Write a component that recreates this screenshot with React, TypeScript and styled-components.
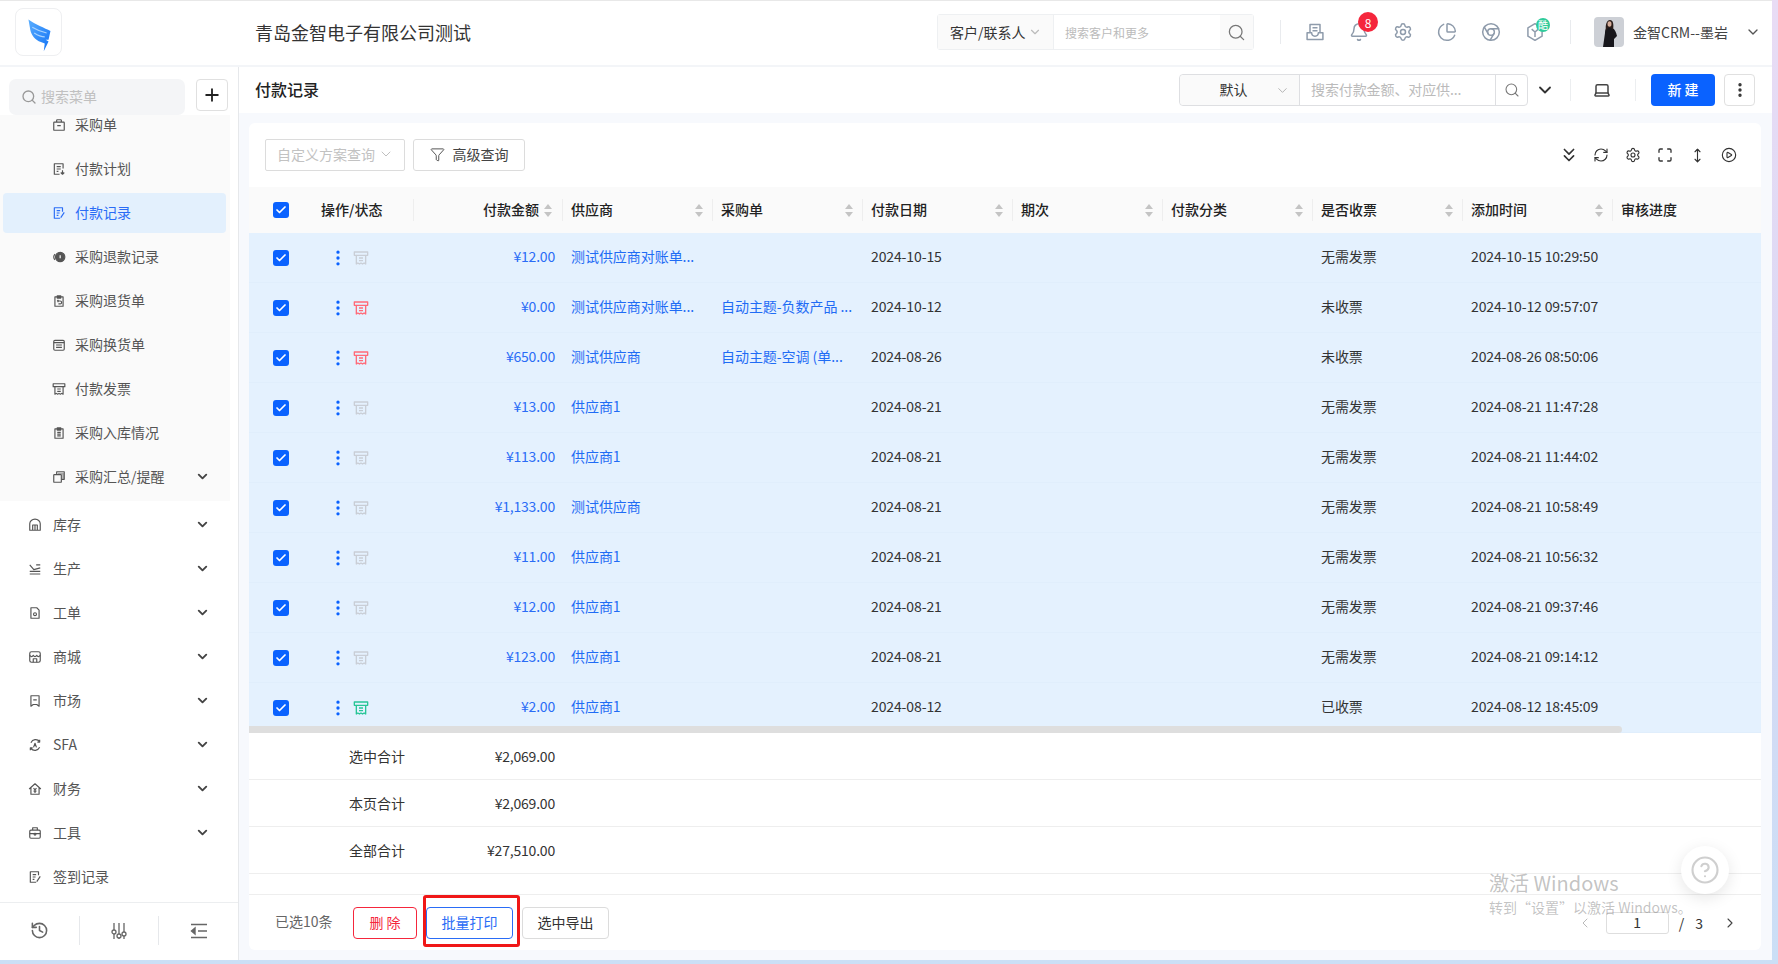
import React from 'react';
import styled, { createGlobalStyle } from 'styled-components';
import {
  Bell, Check, ChartPie, ChevronDown, ChevronLeft, ChevronRight, ChevronsDown, Chrome, CirclePlay, CircleHelp,
  EllipsisVertical, Funnel, History, Laptop, Maximize, MoveVertical, Plus, RefreshCw, Search, Settings,
} from 'lucide-react';

const GlobalStyle = createGlobalStyle`
  html, body { margin: 0; padding: 0; }
  body {
    font-family: "Noto Sans CJK SC", "Liberation Sans", sans-serif;
    font-size: 14px;
    color: #333;
    overflow: hidden;
  }
  * { box-sizing: border-box; }
`;

const COLUMNS = '52px 112px 149px 150px 150px 150px 150px 150px 150px 150px 149px';

const icons: Record<string, React.ReactNode> = {
  bag: <><rect x="3" y="7" width="18" height="14" rx="1" /><path d="M8 7V4a1 1 0 0 1 1-1h6a1 1 0 0 1 1 1v3M9 13h6" /></>,
  plan: <><path d="M19 11V3H4v18h9M8 8h7M8 12h7M8 16h3" /><path d="M18 14v7M15 18l3 3 3-3" /></>,
  record: <><path d="M18 10V3H4v18h10M8 8h6M8 12h5M8 16h3" /><path d="M21 11l-6 9" /></>,
  refund: <><circle cx="14" cy="12" r="8" fill="currentColor" /><path d="M5 7a8 8 0 0 0 0 10" /><path d="M14 9v5" stroke="#fff" /></>,
  back: <><path d="M5 5h14v16H5zM9 3h6v4H9z" /><path d="M9 12h5a2 2 0 0 1 0 5h-3M9 12l2-2M9 12l2 2" /></>,
  swap: <><rect x="3" y="4" width="18" height="17" rx="2" /><path d="M3 8h18M7 12h10M7 16h10" /></>,
  receipt: <><path d="M2 3h20v5h-3v13l-2.300-1.500L14.300 21 12 19.500 9.700 21l-2.400-1.500L5 21V8H2z" /><path d="M5 8h14M9 12h6M9 16h6" /></>,
  list: <><path d="M5 5h14v16H5zM9 3h6v4H9zM9 11h6M9 14h6M9 17h6" /></>,
  stack: <><rect x="3" y="8" width="13" height="13" rx="1" /><path d="M8 8V3h13v13h-5" /><path d="M10 6h9v9" strokeWidth="3" opacity=".5" /></>,
  store: <><path d="M3 21V10a9 8 0 0 1 18 0v11zM8 21v-9h8v9M12 12v9" /></>,
  make: <><path d="M3 5l7 8 11-3M14 5h7M3 16h18M3 20.500h18" /></>,
  ticket: <><path d="M5 3h10l4 4v14H5z" /><circle cx="12" cy="14" r="2.500" /></>,
  mall: <><rect x="3" y="3" width="18" height="18" rx="3" /><path d="M3 9c2 3 4.500 3 6 0 1.500 3 4.500 3 6 0 1.500 3 4 3 6 0M9 21v-6h6v6" /></>,
  market: <><path d="M5 3h14v18l-4-3H9l-4 3zM9 10h6" /></>,
  sfa: <><path d="M5 8a9 9 0 0 1 15-2M20 16a9 9 0 0 1-15 2M20 3v4h-4M4 21v-4h4M9.500 16l2.500-7 2.500 7" /></>,
  money: <><path d="M2 12l10-9 10 9M5 10v11h14V10" /><path d="M9.500 10.500l2.500 3 2.500-3M12 13.500V19M9.500 15.500h5" /></>,
  tool: <><rect x="3" y="7" width="18" height="14" rx="2" /><path d="M8 7V3h8v4M3 13h18" /><circle cx="12" cy="14" r="1.500" /></>,
  sign: <><path d="M18 9V3H4v18h10M8 8h6M8 12h5M8 16h3" /><path d="M21 11l-6 9" /></>,
  tray: <><path d="M6 13V3h12v10M9 7h6M9 10.500h6" /><path d="M2.500 13H8a4 4 0 0 0 8 0h5.500v8h-19z" /></>,
  cube: <><path d="M12 2l8.500 5v10L12 22l-8.500-5V7z" /><path d="M8 8.500l4 3.500 4-3.500M12 12v6" /></>,
};

const subMenu = [
  ['bag', '采购单'], ['plan', '付款计划'], ['record', '付款记录'], ['refund', '采购退款记录'], ['back', '采购退货单'],
  ['swap', '采购换货单'], ['receipt', '付款发票'], ['list', '采购入库情况'], ['stack', '采购汇总/提醒'],
];

const topMenu = [
  ['store', '库存'], ['make', '生产'], ['ticket', '工单'], ['mall', '商城'], ['market', '市场'],
  ['sfa', 'SFA'], ['money', '财务'], ['tool', '工具'], ['sign', '签到记录'],
];

const headers = ['付款金额', '供应商', '采购单', '付款日期', '期次', '付款分类', '是否收票', '添加时间', '审核进度'];

const rows = [
  { tone: 'gray', amount: '¥12.00', supplier: '测试供应商对账单...', order: '', date: '2024-10-15', bill: '无需发票', added: '2024-10-15 10:29:50' },
  { tone: 'red', amount: '¥0.00', supplier: '测试供应商对账单...', order: '自动主题-负数产品 ...', date: '2024-10-12', bill: '未收票', added: '2024-10-12 09:57:07' },
  { tone: 'red', amount: '¥650.00', supplier: '测试供应商', order: '自动主题-空调 (单...', date: '2024-08-26', bill: '未收票', added: '2024-08-26 08:50:06' },
  { tone: 'gray', amount: '¥13.00', supplier: '供应商1', order: '', date: '2024-08-21', bill: '无需发票', added: '2024-08-21 11:47:28' },
  { tone: 'gray', amount: '¥113.00', supplier: '供应商1', order: '', date: '2024-08-21', bill: '无需发票', added: '2024-08-21 11:44:02' },
  { tone: 'gray', amount: '¥1,133.00', supplier: '测试供应商', order: '', date: '2024-08-21', bill: '无需发票', added: '2024-08-21 10:58:49' },
  { tone: 'gray', amount: '¥11.00', supplier: '供应商1', order: '', date: '2024-08-21', bill: '无需发票', added: '2024-08-21 10:56:32' },
  { tone: 'gray', amount: '¥12.00', supplier: '供应商1', order: '', date: '2024-08-21', bill: '无需发票', added: '2024-08-21 09:37:46' },
  { tone: 'gray', amount: '¥123.00', supplier: '供应商1', order: '', date: '2024-08-21', bill: '无需发票', added: '2024-08-21 09:14:12' },
  { tone: 'green', amount: '¥2.00', supplier: '供应商1', order: '', date: '2024-08-12', bill: '已收票', added: '2024-08-12 18:45:09' },
];

const toneColors: Record<string, string> = { gray: '#c9ced6', red: '#ff6a78', green: '#27c596' };

const totals = [['选中合计', '¥2,069.00'], ['本页合计', '¥2,069.00'], ['全部合计', '¥27,510.00']];

const MenuIcon = ({ name, size = 14, weight = 2 }: { name: string; size?: number; weight?: number }) => (
  <svg width={size} height={size} viewBox="0 0 24 24" fill="none" stroke="currentColor" strokeWidth={weight} strokeLinejoin="round">
    {icons[name]}
  </svg>
);

const Logo = () => (
  <svg width="47" height="48" viewBox="0 0 47 48">
    <defs>
      <linearGradient id="wing" x1="0" y1="0" x2="1" y2="1">
        <stop offset="0" stopColor="#5aaeff" />
        <stop offset="1" stopColor="#1272f5" />
      </linearGradient>
    </defs>
    <path d="M13 10C20 15 30 19 36 22L34 31H31L34 33L29 43L30 35L26 33.500C20 31 16 26 15 21Z" fill="url(#wing)" />
    <path d="M17 18C22 21 27 23 32 24M19 24C22 26 26 28 30 28" stroke="#a9d3ff" strokeWidth="1.200" fill="none" />
  </svg>
);

const AvatarArt = () => (
  <svg width="30" height="30" viewBox="0 0 30 30">
    <rect width="30" height="30" fill="#cdd0d6" />
    <path d="M9 30L11 16C11 12 12 11 14 11L18 11C21 12 22 15 23 19L20 22L20 30Z" fill="#17161b" />
    <path d="M12 14C11 7 13 3 16 3C19 3 20 7 19 13L17 11H14Z" fill="#2a1d1a" />
    <ellipse cx="15.500" cy="7" rx="2" ry="2.800" fill="#d7ae9b" />
  </svg>
);

const CheckBox = () => (
  <CheckMark>
    <Check size={12} strokeWidth={3.5} color="#fff" />
  </CheckMark>
);

const App = () => (
  <Root>
    <GlobalStyle />
    <TopBar>
      <LogoBox><Logo /></LogoBox>
      <CompanyName>青岛金智电子有限公司测试</CompanyName>
      <GlobalSearch>
        <SearchType>客户/联系人<ChevronDown size={14} color="#bbb" /></SearchType>
        <GlobalInput>搜索客户和更多</GlobalInput>
        <GlobalSearchButton><Search size={19} color="#777" strokeWidth={1.6} /></GlobalSearchButton>
      </GlobalSearch>
      <TopDivider $left={26} />
      <TopIcons>
        <TopIcon><MenuIcon name="tray" size={20} weight={1.8} /></TopIcon>
        <TopIcon><Bell size={20} strokeWidth={1.8} /><NoticeBadge>8</NoticeBadge></TopIcon>
        <TopIcon><Settings size={20} strokeWidth={1.8} /></TopIcon>
        <TopIcon><ChartPie size={20} strokeWidth={1.8} /></TopIcon>
        <TopIcon><Chrome size={20} strokeWidth={1.8} /></TopIcon>
        <TopIcon><MenuIcon name="cube" size={20} weight={1.8} /><CoolBadge>酷</CoolBadge></TopIcon>
      </TopIcons>
      <TopDivider $left={13} />
      <Avatar><AvatarArt /></Avatar>
      <UserName>金智CRM--墨岩</UserName>
      <UserChevron><ChevronDown size={16} /></UserChevron>
    </TopBar>

    <Body>
      <Sidebar>
        <SideSearchRow>
          <SideSearch><Search size={16} color="#999" /><SideSearchText>搜索菜单</SideSearchText></SideSearch>
          <AddButton><Plus size={20} color="#222" strokeWidth={2.2} /></AddButton>
        </SideSearchRow>
        <MenuScroll>
          <SubMenu>
            {subMenu.map(([icon, label], i) => (
              <SubItem key={label} $active={i === 2}>
                <MenuIcon name={icon} />
                <MenuLabel>{label}</MenuLabel>
                {i === subMenu.length - 1 && <MenuChevron><ChevronDown size={15} strokeWidth={3} /></MenuChevron>}
              </SubItem>
            ))}
          </SubMenu>
          {topMenu.map(([icon, label], i) => (
            <TopItem key={label}>
              <MenuIcon name={icon} />
              <MenuLabel>{label}</MenuLabel>
              {i < topMenu.length - 1 && <MenuChevron><ChevronDown size={15} strokeWidth={3} /></MenuChevron>}
            </TopItem>
          ))}
        </MenuScroll>
        <SideFooter>
          <SideFooterCell><History size={19} /></SideFooterCell>
          <SideFooterCell>
            <svg width="18" height="18" viewBox="0 0 18 18" fill="none" stroke="currentColor" strokeWidth="1.300">
              <path d="M4 1v7M4 12v5M9 1v11M9 16v1M14 1v9M14 14v3" />
              <circle cx="4" cy="10" r="2" /><circle cx="9" cy="14" r="2" /><circle cx="14" cy="12" r="2" />
            </svg>
          </SideFooterCell>
          <SideFooterCell>
            <svg width="18" height="16" viewBox="0 0 18 16" fill="none" stroke="currentColor" strokeWidth="1.400">
              <path d="M1 1.500h16M8 8h9M1 14.500h16" /><path d="M5 5v6L1.500 8z" fill="currentColor" />
            </svg>
          </SideFooterCell>
        </SideFooter>
      </Sidebar>

      <Main>
        <TitleRow>
          <PageTitle>付款记录</PageTitle>
          <TitleSearch>
            <ViewSelect>默认<ViewChevron><ChevronDown size={15} color="#aaa" strokeWidth={1.4} /></ViewChevron></ViewSelect>
            <TitleInput>搜索付款金额、对应供...</TitleInput>
            <TitleSearchButton><Search size={16} color="#777" strokeWidth={1.6} /></TitleSearchButton>
          </TitleSearch>
          <ExpandButton><ChevronDown size={20} color="#333" strokeWidth={2.2} /></ExpandButton>
          <TitleDivider $left={13} />
          <LaptopButton><Laptop size={18} color="#444" /></LaptopButton>
          <TitleDivider $left={17} />
          <NewButton>新 建</NewButton>
          <MoreButton><EllipsisVertical size={18} color="#333" strokeWidth={2.5} /></MoreButton>
        </TitleRow>

        <Content>
          <Card>
            <Toolbar>
              <PlanSelect>自定义方案查询<ChevronDown size={16} color="#bbb" strokeWidth={1.4} /></PlanSelect>
              <FilterButton><Funnel size={15} color="#555" strokeWidth={1.6} />高级查询</FilterButton>
              <ToolIcons>
                <ToolIcon><ChevronsDown size={22} strokeWidth={1.8} /></ToolIcon>
                <ToolIcon><RefreshCw size={16} strokeWidth={1.7} /></ToolIcon>
                <ToolIcon><Settings size={16} strokeWidth={1.7} /></ToolIcon>
                <ToolIcon><Maximize size={16} strokeWidth={2} /></ToolIcon>
                <ToolIcon><MoveVertical size={15} strokeWidth={1.8} /></ToolIcon>
                <ToolIcon><CirclePlay size={16} strokeWidth={1.7} /></ToolIcon>
              </ToolIcons>
            </Toolbar>

            <TableHead>
              <CheckCell><CheckBox /></CheckCell>
              <OpsTitle>操作/状态</OpsTitle>
              {headers.map((h, i) => (
                <HeadCell key={h} $right={i === 0}>
                  <HeadLabel>{h}</HeadLabel>
                  {i < headers.length - 1 && <SortMark />}
                </HeadCell>
              ))}
            </TableHead>

            <TableBody>
              {rows.map((r) => (
                <Row key={r.added}>
                  <CheckCell><CheckBox /></CheckCell>
                  <OpsCell>
                    <EllipsisVertical size={20} color="#0a62ff" strokeWidth={2} />
                    <ReceiptMark $tone={toneColors[r.tone]}><MenuIcon name="receipt" size={16} /></ReceiptMark>
                  </OpsCell>
                  <AmountCell>{r.amount}</AmountCell>
                  <LinkCell>{r.supplier}</LinkCell>
                  <LinkCell>{r.order}</LinkCell>
                  <TextCell>{r.date}</TextCell>
                  <TextCell />
                  <TextCell />
                  <TextCell>{r.bill}</TextCell>
                  <TextCell>{r.added}</TextCell>
                  <TextCell />
                </Row>
              ))}
              <ScrollThumb />
            </TableBody>

            {totals.map(([label, value]) => (
              <TotalRow key={label}>
                <TotalLabel>{label}</TotalLabel>
                <TotalValue>{value}</TotalValue>
              </TotalRow>
            ))}
            <TotalSpacer />

            <Footer>
              <SelectedCount>已选10条</SelectedCount>
              <DeleteButton>删 除</DeleteButton>
              <PrintButton>批量打印</PrintButton>
              <ExportButton>选中导出</ExportButton>
              <Pager>
                <PagerArrow $muted><ChevronLeft size={16} strokeWidth={1.4} /></PagerArrow>
                <PageInput>1</PageInput>
                <PageSlash>/</PageSlash>
                <PageTotal>3</PageTotal>
                <PagerArrow><ChevronRight size={16} strokeWidth={1.6} /></PagerArrow>
              </Pager>
            </Footer>
          </Card>
        </Content>
      </Main>
    </Body>

    <Watermark>
      <WatermarkTitle>激活 Windows</WatermarkTitle>
      <WatermarkText>转到“设置”以激活 Windows。</WatermarkText>
    </Watermark>
    <HelpButton><CircleHelp size={30} color="#cfcfcf" strokeWidth={1.7} /></HelpButton>
  </Root>
);

const Root = styled.div`
  position: relative;
  width: 1778px;
  height: 964px;
  padding: 0 6px 4px 0;
  display: flex;
  flex-direction: column;
  background: linear-gradient(180deg, #e9dcf5 0%, #d8d8f4 50%, #cbdff6 100%);
  overflow: hidden;
`;

const TopBar = styled.header`
  flex: none;
  height: 67px;
  display: flex;
  align-items: center;
  padding: 0 0 2px 15px;
  background: #fff;
  border-top: 1px solid #e8e8e8;
  border-bottom: 2px solid #f3f5f8;
`;

const LogoBox = styled.div`
  width: 47px;
  height: 48px;
  border: 1px solid #eeeff1;
  border-radius: 8px;
  background: #fff;
  display: flex;
`;

const CompanyName = styled.div`
  margin-left: 193px;
  width: 682px;
  font-size: 18px;
  color: #333;
`;

const GlobalSearch = styled.div`
  display: flex;
  width: 317px;
  height: 36px;
  border: 1px solid #eef0f2;
  border-radius: 3px;
`;

const SearchType = styled.div`
  width: 116px;
  display: flex;
  align-items: center;
  padding-left: 12px;
  gap: 2px;
  font-size: 14px;
  background: #fafafa;
  border-right: 1px solid #eef0f2;
`;

const GlobalInput = styled.div`
  flex: 1;
  display: flex;
  align-items: center;
  padding-left: 11px;
  font-size: 12px;
  color: #bbb;
`;

const GlobalSearchButton = styled.div`
  width: 33px;
  background: #fafafa;
  display: flex;
  align-items: center;
  justify-content: center;
`;

const TopDivider = styled.div<{ $left: number }>`
  margin-left: ${(p) => p.$left}px;
  width: 1px;
  height: 24px;
  background: #e9ebee;
`;

const TopIcons = styled.div`
  margin-left: 12px;
  display: flex;
`;

const TopIcon = styled.div`
  position: relative;
  width: 44px;
  height: 30px;
  display: flex;
  align-items: center;
  justify-content: center;
  color: #8e9bab;
`;

const NoticeBadge = styled.span`
  position: absolute;
  left: 21px;
  top: -5px;
  width: 20px;
  height: 20px;
  border-radius: 50%;
  background: #f5263c;
  color: #fff;
  font-size: 12px;
  display: flex;
  align-items: center;
  justify-content: center;
`;

const CoolBadge = styled.span`
  position: absolute;
  left: 23px;
  top: 1px;
  width: 14px;
  height: 14px;
  border-radius: 50%;
  background: #2fcb9b;
  color: #fff;
  font-size: 10px;
  line-height: 14px;
  text-align: center;
`;

const Avatar = styled.div`
  margin-left: 23px;
  width: 30px;
  height: 30px;
  border-radius: 4px;
  overflow: hidden;
  display: flex;
`;

const UserName = styled.div`
  margin-left: 9px;
  width: 112px;
  font-size: 14px;
  color: #444;
  white-space: nowrap;
`;

const UserChevron = styled.div`
  display: flex;
  color: #555;
`;

const Body = styled.div`
  flex: 1;
  min-height: 0;
  display: flex;
`;

const Sidebar = styled.aside`
  flex: none;
  width: 239px;
  display: flex;
  flex-direction: column;
  background: #fff;
  border-right: 1px solid #e6e8eb;
`;

const SideSearchRow = styled.div`
  flex: none;
  display: flex;
  align-items: flex-start;
  gap: 11px;
  height: 48px;
  padding: 12px 0 0 9px;
`;

const SideSearch = styled.div`
  width: 176px;
  height: 36px;
  border-radius: 7px;
  background: #f4f5f7;
  display: flex;
  align-items: center;
  gap: 4px;
  padding-left: 12px;
  font-size: 14px;
  color: #c0c0c0;
`;

const SideSearchText = styled.span`
  padding-bottom: 2px;
`;

const AddButton = styled.div`
  width: 32px;
  height: 32px;
  border: 1px solid #e0e0e0;
  border-radius: 4px;
  display: flex;
  align-items: center;
  justify-content: center;
`;

const MenuScroll = styled.div`
  flex: 1;
  min-height: 0;
  overflow: hidden;
  display: flex;
  flex-direction: column;
`;

const SubMenu = styled.div`
  width: 230px;
  flex: none;
  padding-bottom: 2px;
  margin-bottom: 2px;
  background: #fafafa;
  & > div:first-child { margin-top: -12px; }
`;

const SubItem = styled.div<{ $active?: boolean }>`
  position: relative;
  height: 44px;
  padding-left: 52px;
  display: flex;
  align-items: center;
  gap: 9px;
  font-size: 14px;
  color: ${(p) => (p.$active ? '#2a6cf6' : '#555')};
  &::before {
    content: '';
    display: ${(p) => (p.$active ? 'block' : 'none')};
    position: absolute;
    left: 3px;
    right: 4px;
    top: 2px;
    bottom: 2px;
    border-radius: 4px;
    background: #e3f0fd;
  }
  & > svg, & > span:first-of-type { position: relative; }
`;

const TopItem = styled.div`
  position: relative;
  flex: none;
  height: 44px;
  padding-left: 28px;
  display: flex;
  align-items: center;
  gap: 11px;
  font-size: 14px;
  color: #555;
`;

const MenuLabel = styled.span`
  padding-bottom: 2px;
  color: inherit;
`;

const MenuChevron = styled.span`
  position: absolute;
  left: 195px;
  top: 14px;
  display: flex;
  color: #444;
`;

const SideFooter = styled.div`
  flex: none;
  height: 56px;
  margin-bottom: 2px;
  display: flex;
  align-items: center;
  border-top: 1px solid #eceef0;
`;

const SideFooterCell = styled.div`
  flex: 1;
  height: 29px;
  display: flex;
  align-items: center;
  justify-content: center;
  color: #666;
  & + & { border-left: 1px solid #e6e8eb; }
`;

const Main = styled.main`
  flex: 1;
  min-width: 0;
  display: flex;
  flex-direction: column;
`;

const TitleRow = styled.div`
  flex: none;
  height: 46px;
  display: flex;
  align-items: flex-start;
  padding: 7px 17px 0 16px;
  background: #fff;
`;

const PageTitle = styled.div`
  width: 924px;
  height: 32px;
  line-height: 30px;
  font-size: 16px;
  font-weight: 500;
  color: #222;
`;

const TitleSearch = styled.div`
  display: flex;
  width: 349px;
  height: 32px;
  border: 1px solid #dedfe2;
  border-radius: 4px;
`;

const ViewSelect = styled.div`
  position: relative;
  width: 120px;
  background: #fafafa;
  border-right: 1px solid #dedfe2;
  display: flex;
  align-items: center;
  justify-content: center;
  padding: 0 12px 2px 0;
  font-size: 14px;
  border-radius: 4px 0 0 4px;
`;

const ViewChevron = styled.span`
  position: absolute;
  right: 9px;
  top: 8px;
  display: flex;
`;

const TitleInput = styled.div`
  flex: 1;
  display: flex;
  align-items: center;
  padding: 0 0 2px 11px;
  font-size: 14px;
  color: #bbb;
  white-space: nowrap;
  letter-spacing: -0.1px;
`;

const TitleSearchButton = styled.div`
  width: 32px;
  border-left: 1px solid #dedfe2;
  display: flex;
  align-items: center;
  justify-content: center;
`;

const ExpandButton = styled.div`
  margin-left: 5px;
  width: 24px;
  height: 32px;
  display: flex;
  align-items: center;
  justify-content: center;
`;

const TitleDivider = styled.div<{ $left: number }>`
  margin: 5px 0 0 ${(p) => p.$left}px;
  width: 1px;
  height: 22px;
  background: #eceef0;
`;

const LaptopButton = styled.div`
  margin-left: 15px;
  width: 32px;
  height: 32px;
  display: flex;
  align-items: center;
  justify-content: center;
`;

const NewButton = styled.button`
  margin-left: 15px;
  width: 64px;
  height: 32px;
  border: none;
  border-radius: 4px;
  background: #0a62ff;
  color: #fff;
  font: inherit;
  font-size: 14px;
  font-weight: 500;
  padding: 0 0 2px;
`;

const MoreButton = styled.div`
  margin-left: 9px;
  width: 31px;
  height: 32px;
  border: 1px solid #e0e0e0;
  border-radius: 4px;
  display: flex;
  align-items: center;
  justify-content: center;
`;

const Content = styled.div`
  flex: 1;
  min-height: 0;
  padding: 10px 11px 10px 10px;
  background: #f7f9fd;
`;

const Card = styled.section`
  height: 100%;
  display: flex;
  flex-direction: column;
  background: #fff;
  border-radius: 6px;
  overflow: hidden;
`;

const Toolbar = styled.div`
  flex: none;
  height: 64px;
  display: flex;
  align-items: center;
  padding: 0 16px;
  gap: 8px;
`;

const PlanSelect = styled.div`
  width: 140px;
  height: 32px;
  border: 1px solid #dcdcdc;
  border-radius: 2px;
  display: flex;
  align-items: center;
  padding: 0 0 2px 11px;
  gap: 3px;
  font-size: 14px;
  color: #c2c2c2;
  white-space: nowrap;
`;

const FilterButton = styled.div`
  width: 112px;
  height: 32px;
  border: 1px solid #dcdcdc;
  border-radius: 3px;
  display: flex;
  align-items: center;
  justify-content: center;
  gap: 8px;
  padding-bottom: 2px;
  font-size: 14px;
  color: #444;
`;

const ToolIcons = styled.div`
  margin-left: auto;
  display: flex;
`;

const ToolIcon = styled.div`
  width: 32px;
  height: 32px;
  display: flex;
  align-items: center;
  justify-content: center;
  color: #333;
`;

const TableHead = styled.div`
  flex: none;
  height: 46px;
  display: grid;
  grid-template-columns: ${COLUMNS};
  align-items: center;
  background: #fafafa;
`;

const CheckCell = styled.div`
  padding-left: 24px;
  display: flex;
`;

const CheckMark = styled.span`
  width: 16px;
  height: 16px;
  border-radius: 3px;
  background: #0a62ff;
  display: flex;
  align-items: center;
  justify-content: center;
`;

const OpsTitle = styled.div`
  padding: 0 0 2px 20px;
  font-weight: 500;
  color: #222;
  white-space: nowrap;
`;

const HeadCell = styled.div<{ $right?: boolean }>`
  height: 22px;
  display: flex;
  align-items: center;
  justify-content: ${(p) => (p.$right ? 'flex-end' : 'space-between')};
  gap: ${(p) => (p.$right ? '5px' : '0')};
  padding: 0 ${(p) => (p.$right ? 9 : 8)}px 0 9px;
  border-left: 1px solid #eeeeee;
  font-weight: 500;
  color: #222;
  white-space: nowrap;
`;

const HeadLabel = styled.span`
  padding-bottom: 2px;
  margin-left: -1px;
`;

const SortMark = styled.span`
  width: 9px;
  height: 13px;
  display: flex;
  flex-direction: column;
  justify-content: space-between;
  &::before, &::after {
    content: '';
    width: 0;
    height: 0;
    border-left: 4.500px solid transparent;
    border-right: 4.500px solid transparent;
  }
  &::before { border-bottom: 5px solid #c4c4c4; }
  &::after { border-top: 5px solid #c4c4c4; }
`;

const TableBody = styled.div`
  flex: none;
  position: relative;
`;

const Row = styled.div`
  height: 50px;
  display: grid;
  grid-template-columns: ${COLUMNS};
  align-items: center;
  background: #e4f1fe;
  border-bottom: 1px solid #e0eefc;
`;

const OpsCell = styled.div`
  padding-left: 27px;
  display: flex;
  align-items: center;
  gap: 5px;
`;

const ReceiptMark = styled.span<{ $tone: string }>`
  display: flex;
  color: ${(p) => p.$tone};
`;

const AmountCell = styled.div`
  padding: 0 7px 3px 0;
  text-align: right;
  color: #2a6cf6;
  white-space: nowrap;
  letter-spacing: -0.2px;
`;

const LinkCell = styled.div`
  padding: 0 0 3px 9px;
  color: #1f6cf5;
  white-space: nowrap;
  letter-spacing: -0.05px;
`;

const TextCell = styled.div`
  padding: 0 0 3px 9px;
  color: #333;
  white-space: nowrap;
  letter-spacing: -0.12px;
`;

const ScrollThumb = styled.div`
  position: absolute;
  left: 0;
  bottom: 0;
  width: 1373px;
  height: 7px;
  background: #dedede;
  border-radius: 0 4px 4px 0;
`;

const TotalRow = styled.div`
  flex: none;
  height: 47px;
  display: grid;
  grid-template-columns: 100px 206px;
  align-items: center;
  border-bottom: 1px solid #eeeeee;
`;

const TotalLabel = styled.div`
  grid-column: 2;
  grid-row: 1;
  color: #333;
`;

const TotalValue = styled.div`
  grid-column: 2;
  grid-row: 1;
  text-align: right;
  color: #333;
  letter-spacing: -0.2px;
`;

const TotalSpacer = styled.div`
  flex: none;
  height: 20px;
`;

const Footer = styled.div`
  flex: 1;
  display: flex;
  align-items: flex-start;
  padding: 12px 23px 0 26px;
  border-top: 1px solid #eeeeee;
`;

const SelectedCount = styled.div`
  width: 78px;
  line-height: 28px;
  color: #666;
  white-space: nowrap;
`;

const BaseButton = styled.button`
  height: 32px;
  border: 1px solid #dcdcdc;
  border-radius: 4px;
  background: #fff;
  font: inherit;
  font-size: 14px;
  color: #333;
  padding: 0 0 3px;
`;

const DeleteButton = styled(BaseButton)`
  width: 64px;
  border-color: #f5263c;
  color: #f5263c;
`;

const PrintButton = styled(BaseButton)`
  position: relative;
  width: 87px;
  margin-left: 9px;
  border-color: #2a6cf6;
  color: #2a6cf6;
  &::after {
    content: '';
    position: absolute;
    left: -4px;
    right: -8px;
    top: -13px;
    bottom: -9px;
    border: 3px solid #f01717;
    border-radius: 3px;
  }
`;

const ExportButton = styled(BaseButton)`
  width: 87px;
  margin-left: 9px;
`;

const Pager = styled.div`
  margin-left: auto;
  display: flex;
  align-items: center;
  height: 22px;
  margin-top: 5px;
  line-height: 14px;
`;

const PagerArrow = styled.span<{ $muted?: boolean }>`
  display: flex;
  color: ${(p) => (p.$muted ? '#b5b5b5' : '#444')};
`;

const PageInput = styled.div`
  margin-left: 13px;
  width: 63px;
  height: 22px;
  border: 1px solid #dedede;
  border-radius: 3px;
  text-align: center;
  line-height: 14px;
  padding-top: 2px;
  color: #333;
`;

const PageSlash = styled.span`
  margin-left: 10px;
`;

const PageTotal = styled.span`
  margin-left: 11px;
  margin-right: 19px;
`;

const Watermark = styled.div`
  position: absolute;
  left: 1489px;
  top: 868px;
  pointer-events: none;
  color: rgba(110, 110, 110, 0.42);
`;

const WatermarkTitle = styled.div`
  font-size: 20px;
  line-height: 30px;
`;

const WatermarkText = styled.div`
  margin-top: 2px;
  font-size: 14px;
  line-height: 14px;
`;

const HelpButton = styled.div`
  position: absolute;
  left: 1681px;
  top: 846px;
  width: 48px;
  height: 48px;
  border-radius: 50%;
  background: #fff;
  box-shadow: 0 4px 16px rgba(0, 0, 0, 0.1);
  display: flex;
  align-items: center;
  justify-content: center;
`;

export default App;
